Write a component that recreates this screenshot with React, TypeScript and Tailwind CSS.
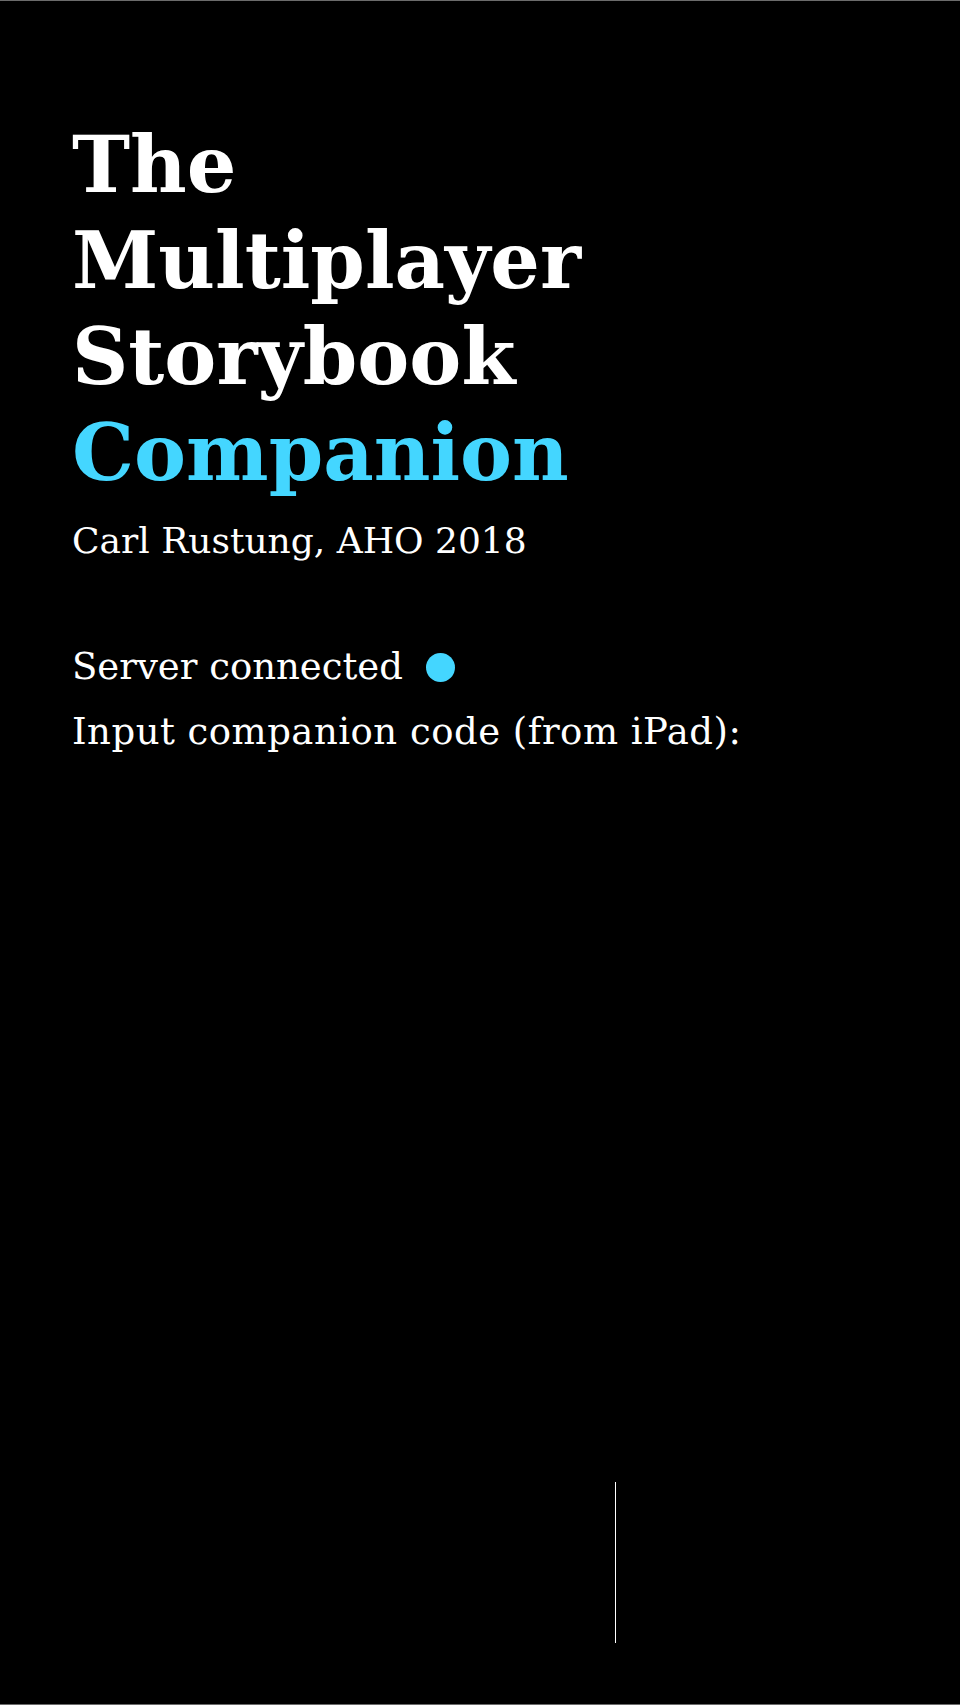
export default function App() {
  return (
    <div className="min-h-[1705px] w-full bg-black border-y border-[#6b6b6b] flex flex-col font-['DejaVu_Serif',serif] text-white">
      <section className="pl-[72px] pt-[116px]">
        <h1 className="text-[78px] font-bold leading-[96px]">
          <span className="block">The</span>
          <span className="block">Multiplayer</span>
          <span className="block">Storybook</span>
          <span className="block text-[#44d6ff]">Companion</span>
        </h1>
        <p className="mt-[15px] text-[36px] leading-[50px]">Carl Rustung, AHO 2018</p>

        <div className="mt-[68px] flex flex-col">
          <div className="flex items-center gap-[23px] text-[37px] leading-[65px]">
            <span>Server connected</span>
            <span className="mt-[2px] h-[29px] w-[29px] rounded-full bg-[#44d6ff]" />
          </div>
          <p className="text-[37px] leading-[65px] tracking-[0.5px]">Input companion code (from iPad):</p>
        </div>
      </section>

      <div className="flex-1" />

      <div className="flex pl-[615px] pb-[61px]">
        <div className="h-[161px] w-px bg-white" />
      </div>
    </div>
  );
}
